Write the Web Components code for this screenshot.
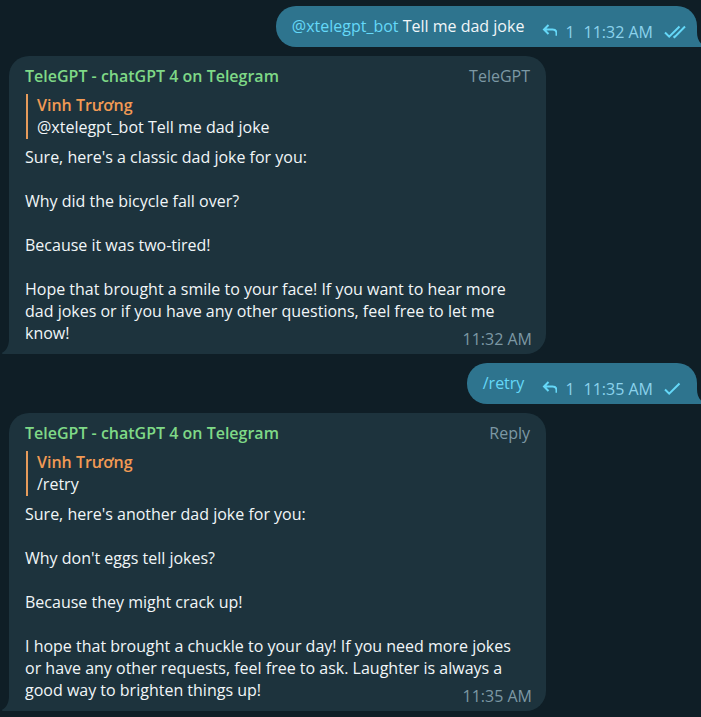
<!DOCTYPE html>
<html lang="en">
<head>
<meta charset="utf-8">
<title>TeleGPT chat</title>
<style>
  html { background: #0f1e26; }
  body { margin: 0; }
</style>
</head>
<body>
<chat-log>
  <sent-message replies="1" time="11:32 AM" status="read"><a href="#xtelegpt_bot">@xtelegpt_bot</a> Tell me dad joke</sent-message>
  <received-message author="TeleGPT - chatGPT 4 on Telegram" badge="TeleGPT" time="11:32 AM">
    <quoted-message slot="quote" author="Vinh Trương">@xtelegpt_bot Tell me dad joke</quoted-message>
    <p>Sure, here's a classic dad joke for you:</p>
    <p>Why did the bicycle fall over?</p>
    <p>Because it was two-tired!</p>
    <p>Hope that brought a smile to your face! If you want to hear more dad jokes or if you have any other questions, feel free to let me know!</p>
  </received-message>
  <sent-message replies="1" time="11:35 AM" status="sent"><a href="#retry">/retry</a></sent-message>
  <received-message author="TeleGPT - chatGPT 4 on Telegram" action="Reply" time="11:35 AM">
    <quoted-message slot="quote" author="Vinh Trương">/retry</quoted-message>
    <p>Sure, here's another dad joke for you:</p>
    <p>Why don't eggs tell jokes?</p>
    <p>Because they might crack up!</p>
    <p>I hope that brought a chuckle to your day! If you need more jokes or have any other requests, feel free to ask. Laughter is always a good way to brighten things up!</p>
  </received-message>
</chat-log>

<template id="chat-log-template">
  <style>
    :host {
      display: flex; flex-direction: column; gap: 9px;
      padding: 6px 4px 6px 9px; overflow: hidden;
      font: 16px/22px "Open Sans", "Noto Sans", sans-serif;
      color: #f1f6f8;
      --sent: #2e748e; --received: #1d333d; --accent: #65d8f8; --muted: #7c98a4;
    }
  </style>
  <slot></slot>
</template>

<template id="sent-template">
  <style>
    :host {
      position: relative; align-self: flex-end;
      display: flex; align-items: flex-end; gap: 18px;
      padding: 9px 11px 10px 16px;
      border-radius: 20px 20px 0 20px; background: var(--sent);
    }
    ::slotted(a) { color: var(--accent); text-decoration: none; }
    .meta { display: flex; align-items: center; margin-bottom: -6px; color: #8bd2ec; white-space: nowrap; }
    .count { margin: 0 9px 0 8px; }
    svg { display: block; fill: none; stroke: var(--accent); stroke-width: 2; }
    .ticks { margin-left: 11px; }
    .tail { position: absolute; left: 100%; bottom: 0; fill: var(--sent); stroke: none; }
    [hidden] { display: none; }
  </style>
  <div><slot></slot></div>
  <div class="meta">
    <svg width="15" height="18" viewBox="0 0 15 18" aria-hidden="true"><path d="M6.5 2 2 6.5 6.5 11M2.2 6.5H10.5c2.6 0 4 1.4 4 3.7v2.6"/></svg>
    <span class="count"></span>
    <time></time>
    <svg class="ticks" width="22" height="14" viewBox="0 0 22 14" role="img"><path d="M1 7.5 5.2 11.7 15.5 1.5"/><path class="second" d="M9.5 11.3l1 .8L21 1.5"/></svg>
  </div>
  <svg class="tail" width="7" height="15" viewBox="0 0 7 15" aria-hidden="true"><path d="M0 0C0 6 2 11 6.5 13.5 7.5 14.2 7 15 6 15H0Z"/></svg>
</template>

<template id="received-template">
  <style>
    :host {
      position: relative; box-sizing: border-box;
      display: flex; flex-direction: column; gap: 7px;
      width: 100%; max-width: 537px; padding: 9px 16px 10px;
      border-radius: 20px 20px 20px 0; background: var(--received);
    }
    header { display: flex; justify-content: space-between; gap: 16px; }
    .author { color: #7fd987; font-weight: 600; }
    .badge, time { color: var(--muted); }
    button { padding: 0; border: 0; background: none; color: var(--muted); font: inherit; cursor: pointer; }
    .content { display: grid; }
    .text, time { grid-area: 1 / 1; }
    .text { display: flex; flex-direction: column; gap: 22px; }
    ::slotted(p) { margin: 0; }
    time { place-self: end; margin: 0 -2px -6px 0; }
    .tail { position: absolute; right: 100%; bottom: 0; fill: var(--received); }
    [hidden] { display: none; }
  </style>
  <header><span class="author"></span><span class="badge"></span><button type="button"></button></header>
  <slot name="quote"></slot>
  <div class="content"><div class="text"><slot></slot></div><time></time></div>
  <svg class="tail" width="7" height="15" viewBox="0 0 7 15" aria-hidden="true"><path d="M7 0C7 6 5 11 .5 13.5-.5 14.2 0 15 1 15H7Z"/></svg>
</template>

<template id="quote-template">
  <style>
    :host { display: block; margin-left: 1px; padding: 0 0 1px 9px; border-left: 2px solid #e69b5b; }
    .author { color: #f29a54; font-weight: 600; }
  </style>
  <div class="author"></div>
  <div><slot></slot></div>
</template>

<script>
  class TemplateElement extends HTMLElement {
    constructor() {
      super();
      const template = document.getElementById(this.constructor.template);
      this.attachShadow({ mode: "open" }).append(template.content.cloneNode(true));
    }
    find(selector) { return this.shadowRoot.querySelector(selector); }
    fill(selector, attribute) {
      const node = this.find(selector);
      const value = this.getAttribute(attribute) || "";
      node.textContent = value;
      node.hidden = !value;
    }
  }

  class ChatLog extends TemplateElement {
    static template = "chat-log-template";
  }

  class SentMessage extends TemplateElement {
    static template = "sent-template";
    connectedCallback() {
      this.fill(".count", "replies");
      this.fill("time", "time");
      const read = this.getAttribute("status") === "read";
      this.find(".ticks").setAttribute("aria-label", read ? "Read" : "Sent");
      this.find(".second").toggleAttribute("hidden", !read);
    }
  }

  class ReceivedMessage extends TemplateElement {
    static template = "received-template";
    connectedCallback() {
      this.fill(".author", "author");
      this.fill(".badge", "badge");
      this.fill("button", "action");
      this.fill("time", "time");
    }
  }

  class QuotedMessage extends TemplateElement {
    static template = "quote-template";
    connectedCallback() { this.fill(".author", "author"); }
  }

  customElements.define("chat-log", ChatLog);
  customElements.define("sent-message", SentMessage);
  customElements.define("received-message", ReceivedMessage);
  customElements.define("quoted-message", QuotedMessage);
</script>
</body>
</html>
